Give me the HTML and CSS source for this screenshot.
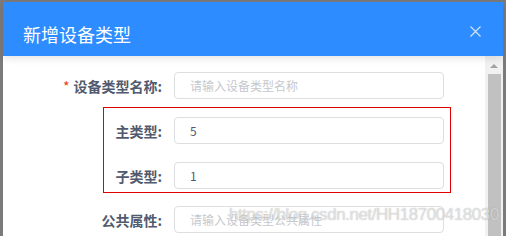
FILE: index.html
```html
<!DOCTYPE html>
<html lang="zh-CN">
<head>
  <meta charset="UTF-8">
  <title>新增设备类型</title>
  <link rel="stylesheet" href="styles.css">
</head>
<body>

  <div class="modal">
    <div class="modal-header">
      <span class="modal-title">新增设备类型</span>
      <span class="modal-close">
        <svg width="11" height="11" viewBox="0 0 11 11">
          <path d="M0.5 0.5 L10.5 10.5 M10.5 0.5 L0.5 10.5" stroke="currentColor" stroke-width="1.2" fill="none"/>
        </svg>
      </span>
    </div>

    <div class="modal-body">
      <div class="form">
        <div class="form-item">
          <label class="form-label"><span class="required">*</span>设备类型名称:</label>
          <input class="form-input" placeholder="请输入设备类型名称">
        </div>

        <div class="highlight">
          <div class="form-item">
            <label class="form-label">主类型:</label>
            <input class="form-input" value="5">
          </div>
          <div class="form-item">
            <label class="form-label">子类型:</label>
            <input class="form-input" value="1">
          </div>
        </div>

        <div class="form-item">
          <label class="form-label">公共属性:</label>
          <input class="form-input" placeholder="请输入设备类型公共属性">
        </div>
      </div>

      <div class="scrollbar">
        <span class="scroll-up"></span>
        <span class="scroll-thumb"></span>
      </div>
    </div>

    <div class="watermark">https://blog.csdn.net/HH18700418030</div>
  </div>

</body>
</html>
```

FILE: styles.css
```css
html, body {
  margin: 0;
  height: 100%;
  overflow: hidden;
}

body {
  background: #7b7b7b;
  font-family: "Noto Sans CJK SC", "Noto Sans", sans-serif;
}

.modal {
  position: relative;
  margin: 2px 3px 0;
  height: 234px;
  background: white;
  display: flex;
  flex-direction: column;
}

.modal-header {
  position: relative;
  z-index: 1;
  height: 54px;
  flex-shrink: 0;
  box-sizing: border-box;
  padding: 20px 22px 0 20px;
  background: #2d8cff;
  display: flex;
  align-items: flex-start;
  justify-content: space-between;
  box-shadow: 0 2px 8px rgba(0,0,0,0.12);
}

.modal-title {
  color: white;
  font-size: 18px;
  line-height: 24px;
}

.modal-close {
  color: #cfe3ff;
  margin-top: 4px;
  display: flex;
}

.modal-body {
  flex: 1;
  display: flex;
  min-height: 0;
}

.form {
  flex: 1;
  padding-top: 16px;
}

.form-item {
  display: flex;
  align-items: center;
  height: 27px;
  margin-bottom: 18px;
}

.form-label {
  width: 171px;
  box-sizing: border-box;
  padding-right: 12px;
  text-align: right;
  font-size: 14px;
  font-weight: bold;
  color: #515a6e;
}

.required {
  color: #ed4014;
  font-weight: normal;
  margin-right: 4px;
}

.form-input {
  width: 270px;
  height: 27px;
  box-sizing: border-box;
  padding: 0 15px;
  border: 1px solid #dcdee2;
  border-radius: 4px;
  font-family: "Noto Sans CJK SC", "Noto Sans", sans-serif;
  font-size: 12px;
  color: #515a6e;
  background: white;
  outline: none;
}

.form-input::placeholder {
  color: #c5c8ce;
}

.highlight {
  margin: -10px 0 13px 100px;
  width: 348px;
  box-sizing: border-box;
  padding: 9px 0 3px;
  border: 1px solid #e00000;
}

.highlight .form-item:last-child {
  margin-bottom: 0;
}

.highlight .form-label {
  width: 70px;
}

.scrollbar {
  width: 18px;
  background: #f1f1f1;
  display: flex;
  flex-direction: column;
  align-items: center;
  padding-top: 8px;
}

.scroll-up {
  width: 0;
  height: 0;
  border-left: 4px solid transparent;
  border-right: 4px solid transparent;
  border-bottom: 4px solid #a3a3a3;
}

.scroll-thumb {
  margin-top: 6px;
  width: 13px;
  flex: 1;
  background: #c1c1c1;
}

.watermark {
  position: absolute;
  left: 226px;
  top: 203px;
  z-index: 2;
  font-family: "Liberation Sans", Arial, sans-serif;
  font-size: 17px;
  letter-spacing: -0.45px;
  color: rgba(255,255,255,0.55);
  text-shadow: 0 0 1px rgba(110,110,110,0.55);
  white-space: nowrap;
}
```
